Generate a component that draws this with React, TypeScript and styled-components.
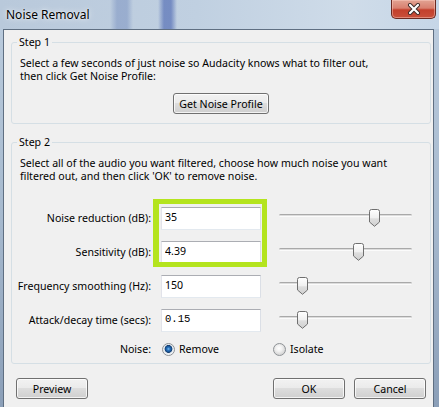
import React from "react";
import styled, { createGlobalStyle } from "styled-components";

const UI_FONT = `"Noto Sans", "Open Sans", "DejaVu Sans", sans-serif`;
const MONO_FONT = `"Liberation Mono", "DejaVu Sans Mono", monospace`;
const TEXT_SIZE = "10.6px";

const GlobalStyle = createGlobalStyle`
  html, body { margin: 0; padding: 0; }
  body { background: #ffffff; font-family: ${UI_FONT}; }
  *, *::before, *::after { box-sizing: border-box; }
`;

const Window = styled.div`
  width: 439px;
  height: 407px;
  overflow: hidden;
  display: flex;
  flex-direction: column;
  font-family: ${UI_FONT};
  font-size: ${TEXT_SIZE};
  color: #000;
  background:
    linear-gradient(90deg, transparent 0 110px, rgba(70, 100, 170, 0.3) 117px 127px, transparent 133px 158px, rgba(45, 75, 165, 0.5) 164px 171px, transparent 177px),
    linear-gradient(90deg, #b9c9db 0%, #c0d0e1 45%, #cfdce9 80%, #c6d6e7 100%);
`;

const TitleBar = styled.div`
  height: 29px;
  flex: none;
  display: flex;
  justify-content: space-between;
  align-items: flex-start;
  padding: 0 3px 0 6px;
`;

const TitleText = styled.span`
  align-self: center;
  font-size: 12px;
  line-height: 16px;
  color: #000;
  text-shadow: 0 0 6px rgba(255, 255, 255, 0.9), 0 0 2px rgba(255, 255, 255, 0.8);
`;

const CloseButton = styled.div`
  width: 45px;
  height: 19px;
  display: flex;
  align-items: center;
  justify-content: center;
  border: 1px solid #6b2a22;
  border-top: none;
  border-radius: 0 0 5px 5px;
  background: linear-gradient(180deg, #e2a393 0%, #d8806f 45%, #c3402c 55%, #c9503b 100%);
  box-shadow: inset 0 0 0 1px rgba(255, 210, 200, 0.45);
`;

const Frame = styled.div`
  flex: 1;
  min-height: 0;
  display: flex;
  padding: 0 5px 0 3px;
  background: linear-gradient(180deg, #b9cadc 0%, #a6b9ce 50%, #8b9fb8 100%);
`;

const Client = styled.div`
  flex: 1;
  display: flex;
  flex-direction: column;
  background: #f0f0f0;
  border: 1px solid #5f6f82;
  border-bottom: none;
  padding: 0 2px 0 7px;
`;

const Group = styled.section<{ $marginTop: number; $padBottom: number }>`
  position: relative;
  margin-top: ${(p) => p.$marginTop}px;
  border: 1px solid #d5dfe5;
  border-radius: 3px;
  padding: 14px 8px ${(p) => p.$padBottom}px 8px;
`;

const Caption = styled.span`
  position: absolute;
  top: -8px;
  left: 5px;
  padding: 0 2px;
  background: #f0f0f0;
  line-height: 15px;
`;

const Para = styled.p`
  margin: 0;
  line-height: 13px;
  white-space: nowrap;
`;

const CenterRow = styled.div`
  display: flex;
  justify-content: center;
  margin-top: 10px;
`;

const Button = styled.button<{ $width: number }>`
  width: ${(p) => p.$width}px;
  height: 21px;
  margin: 0;
  padding: 0;
  border: 1px solid #707070;
  border-radius: 3px;
  background: linear-gradient(180deg, #f2f2f2 0%, #ebebeb 45%, #dddddd 50%, #cfcfcf 100%);
  box-shadow: inset 0 0 0 1px rgba(255, 255, 255, 0.75);
  font-family: ${UI_FONT};
  font-size: ${TEXT_SIZE};
  color: #000;
`;

const FieldGrid = styled.div`
  display: grid;
  grid-template-columns: 141px 118px 133px;
  grid-template-rows: repeat(4, 34px) 24px;
  align-items: center;
  margin-top: 18px;
`;

const FieldLabel = styled.span<{ $row: number }>`
  grid-column: 1;
  grid-row: ${(p) => p.$row};
  justify-self: end;
  padding-right: 10px;
  white-space: nowrap;
`;

const TextBox = styled.input<{ $row: number; $mono?: boolean }>`
  grid-column: 2;
  grid-row: ${(p) => p.$row};
  justify-self: start;
  width: 100px;
  height: 23px;
  margin: 0;
  padding: 0 3px 2px;
  border: 1px solid;
  border-color: #abadb3 #dbdfe6 #e3e9ef #e2e3ea;
  background: #fff;
  font-family: ${(p) => (p.$mono ? MONO_FONT : UI_FONT)};
  font-size: ${TEXT_SIZE};
  color: #000;
  outline: none;
`;

const Highlight = styled.div`
  grid-column: 2;
  grid-row: 1 / 3;
  align-self: stretch;
  margin: -2px 12px 2px -8px;
  border: 5px solid #b4e41e;
  border-left-width: 6px;
  pointer-events: none;
`;

const Slider = styled.div<{ $row: number }>`
  grid-column: 3;
  grid-row: ${(p) => p.$row};
  position: relative;
  height: 18px;
  padding-top: 5px;
`;

const Track = styled.div`
  height: 3px;
  border-radius: 2px;
  border-top: 1px solid #a9a9a9;
  border-bottom: 1px solid #fbfbfb;
  background: #dcdcdc;
`;

const ThumbWrap = styled.div`
  position: absolute;
  top: 0;
  width: 11px;
  height: 18px;
`;

const RadioRow = styled.div`
  grid-column: 2 / 4;
  grid-row: 5;
  display: flex;
  align-items: center;
`;

const RadioOption = styled.label<{ $width?: number }>`
  display: flex;
  align-items: center;
  gap: 4px;
  width: ${(p) => (p.$width ? `${p.$width}px` : "auto")};
  padding-left: 1px;
`;

const RadioDot = styled.span<{ $checked: boolean }>`
  width: 13px;
  height: 13px;
  border-radius: 50%;
  border: 1px solid #8e9296;
  background: ${(p) =>
    p.$checked
      ? "radial-gradient(circle at 50% 45%, #7fc0f0 0, #2a74c0 1.5px, #16508f 3px, #1a3f6e 3.6px, #dfe6ec 4.2px, #f7f8f9 6px)"
      : "radial-gradient(circle at 45% 40%, #ffffff 0, #f1f1f1 3px, #d8d8d8 6px)"};
`;

const ButtonBar = styled.div`
  display: flex;
  gap: 9px;
  margin-top: 14px;
  padding: 0 5px;
`;

const Spacer = styled.div`
  flex: 1;
`;

function Thumb({ fraction }: { fraction: number }) {
  const left = Math.round(fraction * (133 - 11));
  return (
    <ThumbWrap style={{ left }}>
      <svg width="11" height="18" viewBox="0 0 11 18">
        <defs>
          <linearGradient id="thumbFill" x1="0" y1="0" x2="0" y2="1">
            <stop offset="0" stopColor="#ffffff" />
            <stop offset="0.5" stopColor="#f0f0f0" />
            <stop offset="0.55" stopColor="#dedede" />
            <stop offset="1" stopColor="#d0d0d0" />
          </linearGradient>
        </defs>
        <path
          d="M0.5 2.5 Q0.5 0.5 2.5 0.5 H8.5 Q10.5 0.5 10.5 2.5 V13 L5.5 17.3 L0.5 13 Z"
          fill="url(#thumbFill)"
          stroke="#6f6f6f"
          strokeWidth="1"
        />
      </svg>
    </ThumbWrap>
  );
}

const rows = [
  { label: "Noise reduction (dB):", value: "35", slider: 0.74 },
  { label: "Sensitivity (dB):", value: "4.39", slider: 0.61 },
  { label: "Frequency smoothing (Hz):", value: "150", slider: 0.15 },
  { label: "Attack/decay time (secs):", value: "0.15", slider: 0.15, mono: true },
];

export default function App() {
  return (
    <>
      <GlobalStyle />
      <Window>
        <TitleBar>
          <TitleText>Noise Removal</TitleText>
          <CloseButton aria-label="Close">
            <svg width="14" height="12" viewBox="0 0 14 12">
              <path d="M3 2 L11 10 M11 2 L3 10" stroke="#3a2a28" strokeWidth="4" strokeLinecap="round" />
              <path d="M3 2 L11 10 M11 2 L3 10" stroke="#ffffff" strokeWidth="2.2" strokeLinecap="round" />
            </svg>
          </CloseButton>
        </TitleBar>
        <Frame>
          <Client>
            <Group $marginTop={12} $padBottom={9}>
              <Caption>Step 1</Caption>
              <Para>
                Select a few seconds of just noise so Audacity knows what to filter out,
                <br />
                then click Get Noise Profile:
              </Para>
              <CenterRow>
                <Button $width={96}>Get Noise Profile</Button>
              </CenterRow>
            </Group>
            <Group $marginTop={18} $padBottom={2}>
              <Caption>Step 2</Caption>
              <Para>
                Select all of the audio you want filtered, choose how much noise you want
                <br />
                filtered out, and then click 'OK' to remove noise.
              </Para>
              <FieldGrid>
                {rows.map((r, i) => (
                  <React.Fragment key={r.label}>
                    <FieldLabel $row={i + 1}>{r.label}</FieldLabel>
                    <TextBox $row={i + 1} $mono={r.mono} defaultValue={r.value} readOnly />
                    <Slider $row={i + 1}>
                      <Track />
                      <Thumb fraction={r.slider} />
                    </Slider>
                  </React.Fragment>
                ))}
                <Highlight />
                <FieldLabel $row={5}>Noise:</FieldLabel>
                <RadioRow>
                  <RadioOption $width={111}>
                    <RadioDot $checked />
                    Remove
                  </RadioOption>
                  <RadioOption>
                    <RadioDot $checked={false} />
                    Isolate
                  </RadioOption>
                </RadioRow>
              </FieldGrid>
            </Group>
            <ButtonBar>
              <Button $width={72}>Preview</Button>
              <Spacer />
              <Button $width={72}>OK</Button>
              <Button $width={72}>Cancel</Button>
            </ButtonBar>
          </Client>
        </Frame>
      </Window>
    </>
  );
}
